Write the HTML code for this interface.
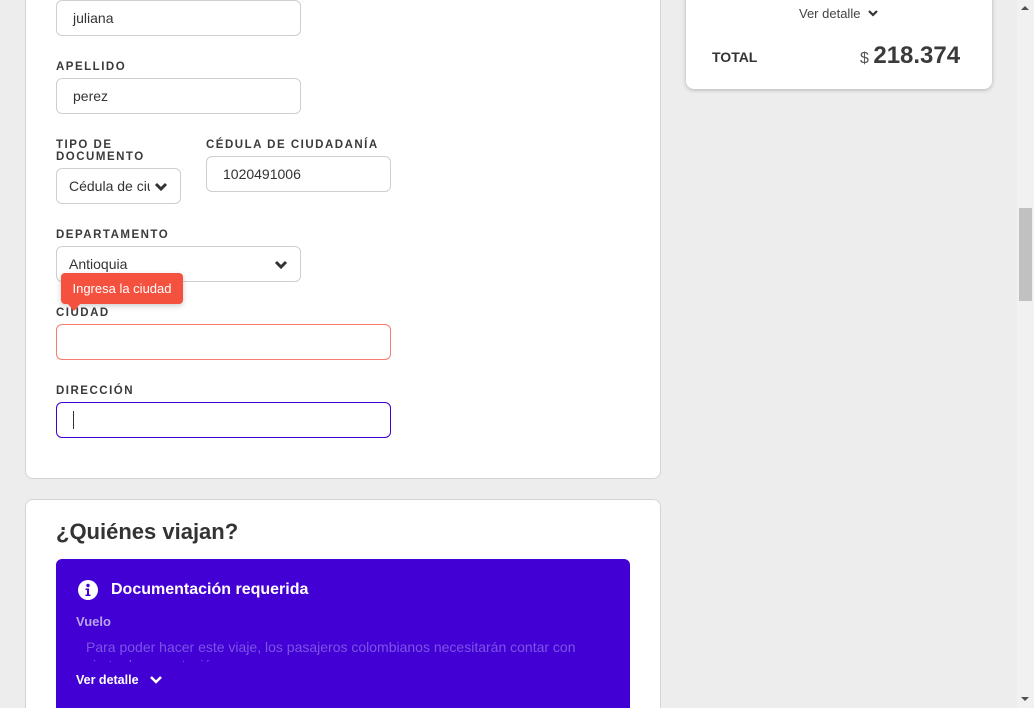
<!DOCTYPE html>
<html style="overflow:hidden;width:1034px;height:708px"><head><meta charset="utf-8"><style>
*{box-sizing:border-box;margin:0;padding:0}
body{width:1034px;height:708px;overflow:hidden;background:#ededed;font-family:"Liberation Sans",sans-serif;position:relative;color:#333}
.card{position:absolute;background:#fff;border:1px solid #d4d4d4;border-radius:8px}
.lbl{position:absolute;font-size:11.5px;font-weight:bold;letter-spacing:1.5px;color:#3a3a3a;line-height:12px}
.inp{position:absolute;height:36px;border:1px solid #cfcfcf;border-radius:6px;background:#fff;font-size:14px;color:#333;line-height:34px;padding-left:16px}
.chev{position:absolute}
</style></head><body>
<div class="card" style="left:25px;top:-20px;width:636px;height:499px"></div>
<div class="inp" style="left:56px;top:0;width:245px;height:36px;line-height:34px">juliana</div>
<div class="lbl" style="left:56px;top:61px">APELLIDO</div>
<div class="inp" style="left:56px;top:78px;width:245px">perez</div>
<div class="lbl" style="left:56px;top:139px">TIPO DE<br>DOCUMENTO</div>
<div class="lbl" style="left:206px;top:139px">CÉDULA DE CIUDADANÍA</div>
<div class="inp" style="left:56px;top:168px;width:125px;padding-left:12px;overflow:hidden;white-space:nowrap">Cédula de ciu</div>
<div style="position:absolute;left:150px;top:176px;width:26px;height:20px;background:#fff"></div>
<svg class="chev" style="left:154px;top:182px" width="14" height="10" viewBox="0 0 14 10"><path d="M2 2l5 5 5-5" fill="none" stroke="#333" stroke-width="3"/></svg>
<div class="inp" style="left:206px;top:156px;width:185px">1020491006</div>
<div class="lbl" style="left:56px;top:229px">DEPARTAMENTO</div>
<div class="inp" style="left:56px;top:246px;width:245px;padding-left:12px">Antioquia</div>
<svg class="chev" style="left:274px;top:260px" width="14" height="10" viewBox="0 0 14 10"><path d="M2 2l5 5 5-5" fill="none" stroke="#333" stroke-width="3"/></svg>
<div class="lbl" style="left:56px;top:307px">CIUDAD</div>
<div style="position:absolute;left:61px;top:273px;width:122px;height:31px;background:#f5513f;border-radius:4px;color:#fff;font-size:13px;line-height:31px;text-align:center;box-shadow:0 2px 6px rgba(0,0,0,.2)">Ingresa la ciudad</div>
<div style="position:absolute;left:67px;top:303px;width:0;height:0;border-left:7px solid transparent;border-right:7px solid transparent;border-top:8px solid #f5513f"></div>
<div class="inp" style="left:56px;top:324px;width:335px;border-color:#f77b6e"></div>
<div class="lbl" style="left:56px;top:385px">DIRECCIÓN</div>
<div class="inp" style="left:56px;top:402px;width:335px;border-color:#4300d4"></div>
<div style="position:absolute;left:73px;top:411px;width:1px;height:18px;background:#333"></div>

<div class="card" style="left:25px;top:499px;width:636px;height:220px"></div>
<div style="position:absolute;left:56px;top:519px;font-size:22px;font-weight:bold;color:#333">¿Quiénes viajan?</div>
<div style="position:absolute;left:56px;top:559px;width:574px;height:160px;background:#4300d4;border-radius:6px"></div>
<svg style="position:absolute;left:77px;top:579px" width="22" height="22" viewBox="0 0 22 22"><circle cx="11" cy="11" r="10" fill="#fff"/><circle cx="11" cy="6.5" r="1.7" fill="#4300d4"/><path d="M8.5 9.5h3.5v6h1.5v1.5h-5v-1.5h1.5v-4.5h-1.5z" fill="#4300d4"/></svg>
<div style="position:absolute;left:111px;top:581px;font-size:16px;font-weight:bold;color:#fff">Documentación requerida</div>
<div style="position:absolute;left:76px;top:614px;font-size:13px;font-weight:bold;color:#b9a3f0">Vuelo</div>
<div style="position:absolute;left:86px;top:638px;font-size:14px;color:#7b55e6;height:24px;overflow:hidden;line-height:18px;width:520px">Para poder hacer este viaje, los pasajeros colombianos necesitarán contar con cierta documentación:</div>
<div style="position:absolute;left:76px;top:673px;font-size:12.5px;font-weight:bold;color:#fff">Ver detalle</div>
<svg class="chev" style="left:149px;top:675px" width="14" height="10" viewBox="0 0 14 10"><path d="M2 2l5 5 5-5" fill="none" stroke="#fff" stroke-width="2.5"/></svg>

<div class="card" style="left:686px;top:-10px;width:306px;height:99px;border:none;box-shadow:0 1px 4px rgba(0,0,0,.25)"></div>
<div style="position:absolute;left:799px;top:6px;font-size:13px;color:#444">Ver detalle</div>
<svg class="chev" style="left:867px;top:9px" width="12" height="9" viewBox="0 0 12 9"><path d="M2 2l4 4 4-4" fill="none" stroke="#333" stroke-width="2.2"/></svg>
<div style="position:absolute;left:712px;top:49px;font-size:14px;font-weight:bold;color:#333">TOTAL</div>
<div style="position:absolute;left:860px;top:42px;font-size:24px;font-weight:bold;color:#3a3a3a;white-space:nowrap"><span style="font-size:16px;font-weight:normal;color:#555">$ </span>218.374</div>

<div style="position:absolute;left:1017px;top:0;width:17px;height:708px;background:#f1f1f1"></div>
<div style="position:absolute;left:1019px;top:208px;width:13px;height:93px;background:#c1c1c1"></div>
<div style="position:absolute;left:1021px;top:6px;border-left:4px solid transparent;border-right:4px solid transparent;border-bottom:4px solid #505050"></div>
<div style="position:absolute;left:1021px;top:697px;border-left:4px solid transparent;border-right:4px solid transparent;border-top:4px solid #505050"></div>
</body></html>
